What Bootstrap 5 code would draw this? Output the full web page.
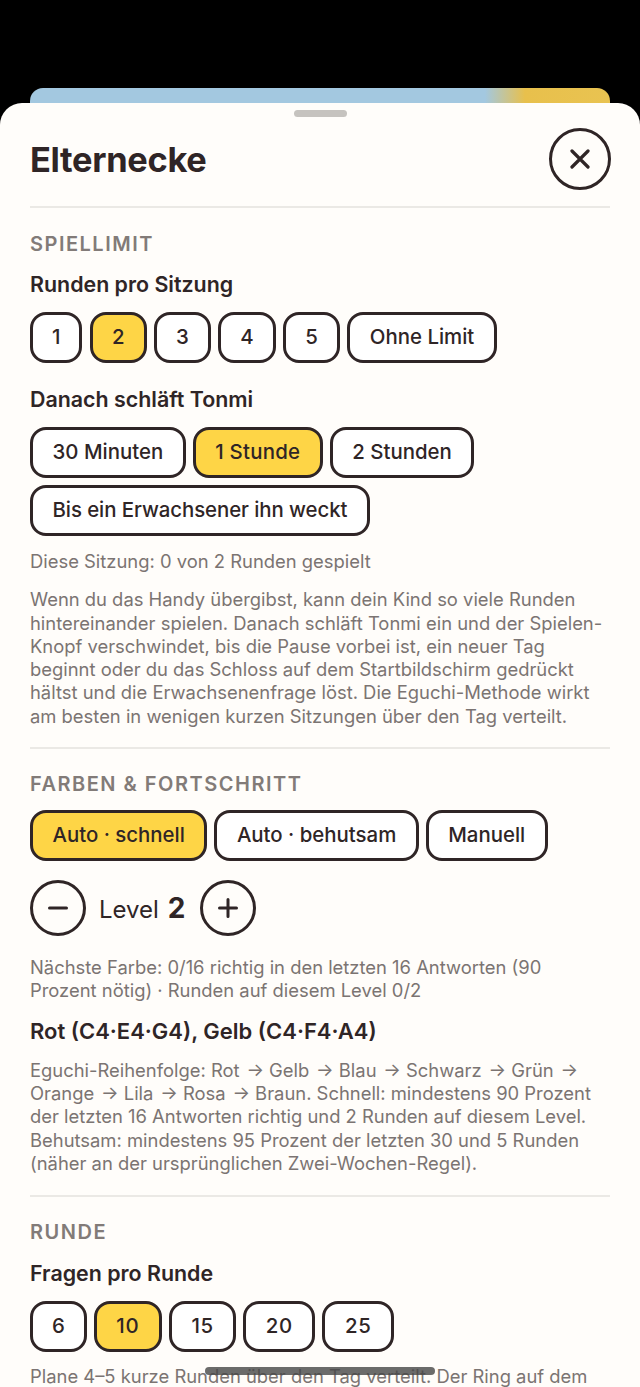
<!DOCTYPE html>
<html lang="de">
<head>
<meta charset="UTF-8">
<meta name="viewport" content="width=device-width, initial-scale=1.0">
<title>Elternecke</title>
<link rel="stylesheet" href="https://cdn.jsdelivr.net/npm/bootstrap@5.3.3/dist/css/bootstrap.min.css">
<style>
    html, body { height: 100%; }
    body { background: #000; font-family: Inter, "Liberation Sans", sans-serif; color: #2f2526; overflow: hidden; }
    .screen { height: 1387px; padding-top: 88px; position: relative; overflow: hidden; }
    .back-card { height: 40px; margin: 0 30px -25px; border-radius: 13px; background: linear-gradient(90deg, #a3c8e0 0, #a3c8e0 455px, #e8c04c 495px, #e9c351 100%); }
    .sheet { position: relative; background: #fffdfa; border-radius: 22px 22px 0 0; height: 1299px; padding: 0 30px; overflow: hidden; }
    .handle { width: 53px; height: 7px; border-radius: 4px; background: #c6c3bf; position: absolute; top: 7px; left: 294px; }
    .head { height: 105px; padding-top: 25px; border-bottom: 2px solid #ebe9e5; }
    .head h1 { font-size: 34.4px; font-weight: 700; letter-spacing: -0.3px; margin: 11px 0 0; }
    .round-btn { width: 62px; height: 62px; border: 3px solid #2f2526; border-radius: 50%; background: #fffdfa; padding: 0; margin-right: -1px; margin-left: -1px; }
    .step-btn { width: 56px; height: 56px; border: 3px solid #2f2526; border-radius: 50%; background: #fffdfa; padding: 0; flex: none; }
    .sec-title { font-size: 20px; font-weight: 600; letter-spacing: 1.5px; color: #827b78; line-height: 24px; margin: 0; }
    .opt-label { font-size: 21.4px; font-weight: 600; line-height: 28px; margin: 0; }
    .opt-label.big { font-size: 22px; }
    .chip-row { display: flex; flex-wrap: wrap; gap: 7px; }
    .chip-row.wide-gap { gap: 7.5px; }
    .chip { height: 51px; border: 3px solid #2f2526; border-radius: 16px; background: #fff; color: #2f2526; font-size: 20.4px; font-weight: 500; padding: 0 19.5px; line-height: 1; }
    .chip.on { background: #fed546; }
    .chip-digit { padding: 0 19px; }
    .chip-two { letter-spacing: .7px; }
    .chip-spaced { letter-spacing: .25px; }
    .chip-long { letter-spacing: -.07px; }
    .info { font-size: 18.4px; line-height: 23.3px; color: #7b7472; margin: 0; }
    .sep { height: 2px; background: #ebe9e5; }
    .level-text { font-size: 24px; margin: 0 15px 0 13px; white-space: nowrap; }
    .level-text b { font-size: 28px; font-weight: 700; margin-left: 2px; }
    .home-bar { position: absolute; left: 205px; top: 1367px; width: 230px; height: 8px; border-radius: 4px; background: rgba(70,70,70,.8); }
    .top-13 { margin-top: 13px; }
    .top-14 { margin-top: 14px; }
    .top-15 { margin-top: 15px; }
    .top-19 { margin-top: 19px; }
    .top-20 { margin-top: 20px; }
    .top-22 { margin-top: 22px; }
    .top-23 { margin-top: 23px; }
    .top-24 { margin-top: 24px; }
</style>
</head>
<body>
<div class="screen">
    <div class="back-card"></div>
    <div class="sheet">
        <div class="handle"></div>
        <div class="head d-flex justify-content-between align-items-start">
            <h1>Elternecke</h1>
            <button class="round-btn d-flex align-items-center justify-content-center" type="button" aria-label="Schließen">
                <svg width="20" height="20" viewBox="0 0 20 20"><path d="M2 2 18 18M18 2 2 18" stroke="#2f2526" stroke-width="3.2" stroke-linecap="round"/></svg>
            </button>
        </div>

        <h2 class="sec-title top-24">SPIELLIMIT</h2>
        <p class="opt-label top-14">Runden pro Sitzung</p>
        <div class="chip-row wide-gap top-14">
            <button class="chip chip-digit" type="button">1</button>
            <button class="chip chip-digit on" type="button">2</button>
            <button class="chip chip-digit" type="button">3</button>
            <button class="chip chip-digit" type="button">4</button>
            <button class="chip chip-digit" type="button">5</button>
            <button class="chip" type="button">Ohne Limit</button>
        </div>
        <p class="opt-label top-22">Danach schläft Tonmi</p>
        <div class="chip-row top-14">
            <button class="chip" type="button">30 Minuten</button>
            <button class="chip chip-spaced on" type="button">1 Stunde</button>
            <button class="chip" type="button">2 Stunden</button>
            <button class="chip chip-long" type="button">Bis ein Erwachsener ihn weckt</button>
        </div>
        <p class="info top-14">Diese Sitzung: 0 von 2 Runden gespielt</p>
        <p class="info top-15">Wenn du das Handy übergibst, kann dein Kind so viele Runden hintereinander spielen. Danach schläft Tonmi ein und der Spielen-Knopf verschwindet, bis die Pause vorbei ist, ein neuer Tag beginnt oder du das Schloss auf dem Startbildschirm gedrückt hältst und die Erwachsenenfrage löst. Die Eguchi-Methode wirkt am besten in wenigen kurzen Sitzungen über den Tag verteilt.</p>
        <div class="sep top-19"></div>

        <h2 class="sec-title top-23">FARBEN &amp; FORTSCHRITT</h2>
        <div class="chip-row top-14">
            <button class="chip on" type="button">Auto · schnell</button>
            <button class="chip" type="button">Auto · behutsam</button>
            <button class="chip" type="button">Manuell</button>
        </div>
        <div class="d-flex align-items-center top-19">
            <button class="step-btn d-flex align-items-center justify-content-center" type="button" aria-label="Weniger">
                <svg width="20" height="4" viewBox="0 0 20 4"><path d="M1.5 2H18.5" stroke="#2f2526" stroke-width="3" stroke-linecap="round"/></svg>
            </button>
            <span class="level-text">Level <b>2</b></span>
            <button class="step-btn d-flex align-items-center justify-content-center" type="button" aria-label="Mehr">
                <svg width="20" height="20" viewBox="0 0 20 20"><path d="M1.5 10H18.5M10 1.5V18.5" stroke="#2f2526" stroke-width="3" stroke-linecap="round"/></svg>
            </button>
        </div>
        <p class="info top-20">Nächste Farbe: 0/16 richtig in den letzten 16 Antworten (90 Prozent nötig) · Runden auf diesem Level 0/2</p>
        <p class="opt-label big top-14">Rot (C4·E4·G4), Gelb (C4·F4·A4)</p>
        <p class="info top-14">Eguchi-Reihenfolge: Rot &#8202;→ Gelb &#8202;→ Blau &#8202;→ Schwarz &#8202;→ Grün &#8202;→ Orange &#8202;→ Lila &#8202;→ Rosa &#8202;→ Braun. Schnell: mindestens 90 Prozent der letzten 16 Antworten richtig und 2 Runden auf diesem Level. Behutsam: mindestens 95 Prozent der letzten 30 und 5 Runden (näher an der ursprünglichen Zwei-Wochen-Regel).</p>
        <div class="sep top-20"></div>

        <h2 class="sec-title top-23">RUNDE</h2>
        <p class="opt-label top-15">Fragen pro Runde</p>
        <div class="chip-row top-14">
            <button class="chip chip-digit" type="button">6</button>
            <button class="chip chip-two on" type="button">10</button>
            <button class="chip chip-two" type="button">15</button>
            <button class="chip chip-two" type="button">20</button>
            <button class="chip chip-two" type="button">25</button>
        </div>
        <p class="info top-13">Plane 4–5 kurze Runden über den Tag verteilt. Der Ring auf dem</p>
    </div>
    <div class="home-bar"></div>
</div>
<script src="https://cdn.jsdelivr.net/npm/bootstrap@5.3.3/dist/js/bootstrap.bundle.min.js"></script>
</body>
</html>
